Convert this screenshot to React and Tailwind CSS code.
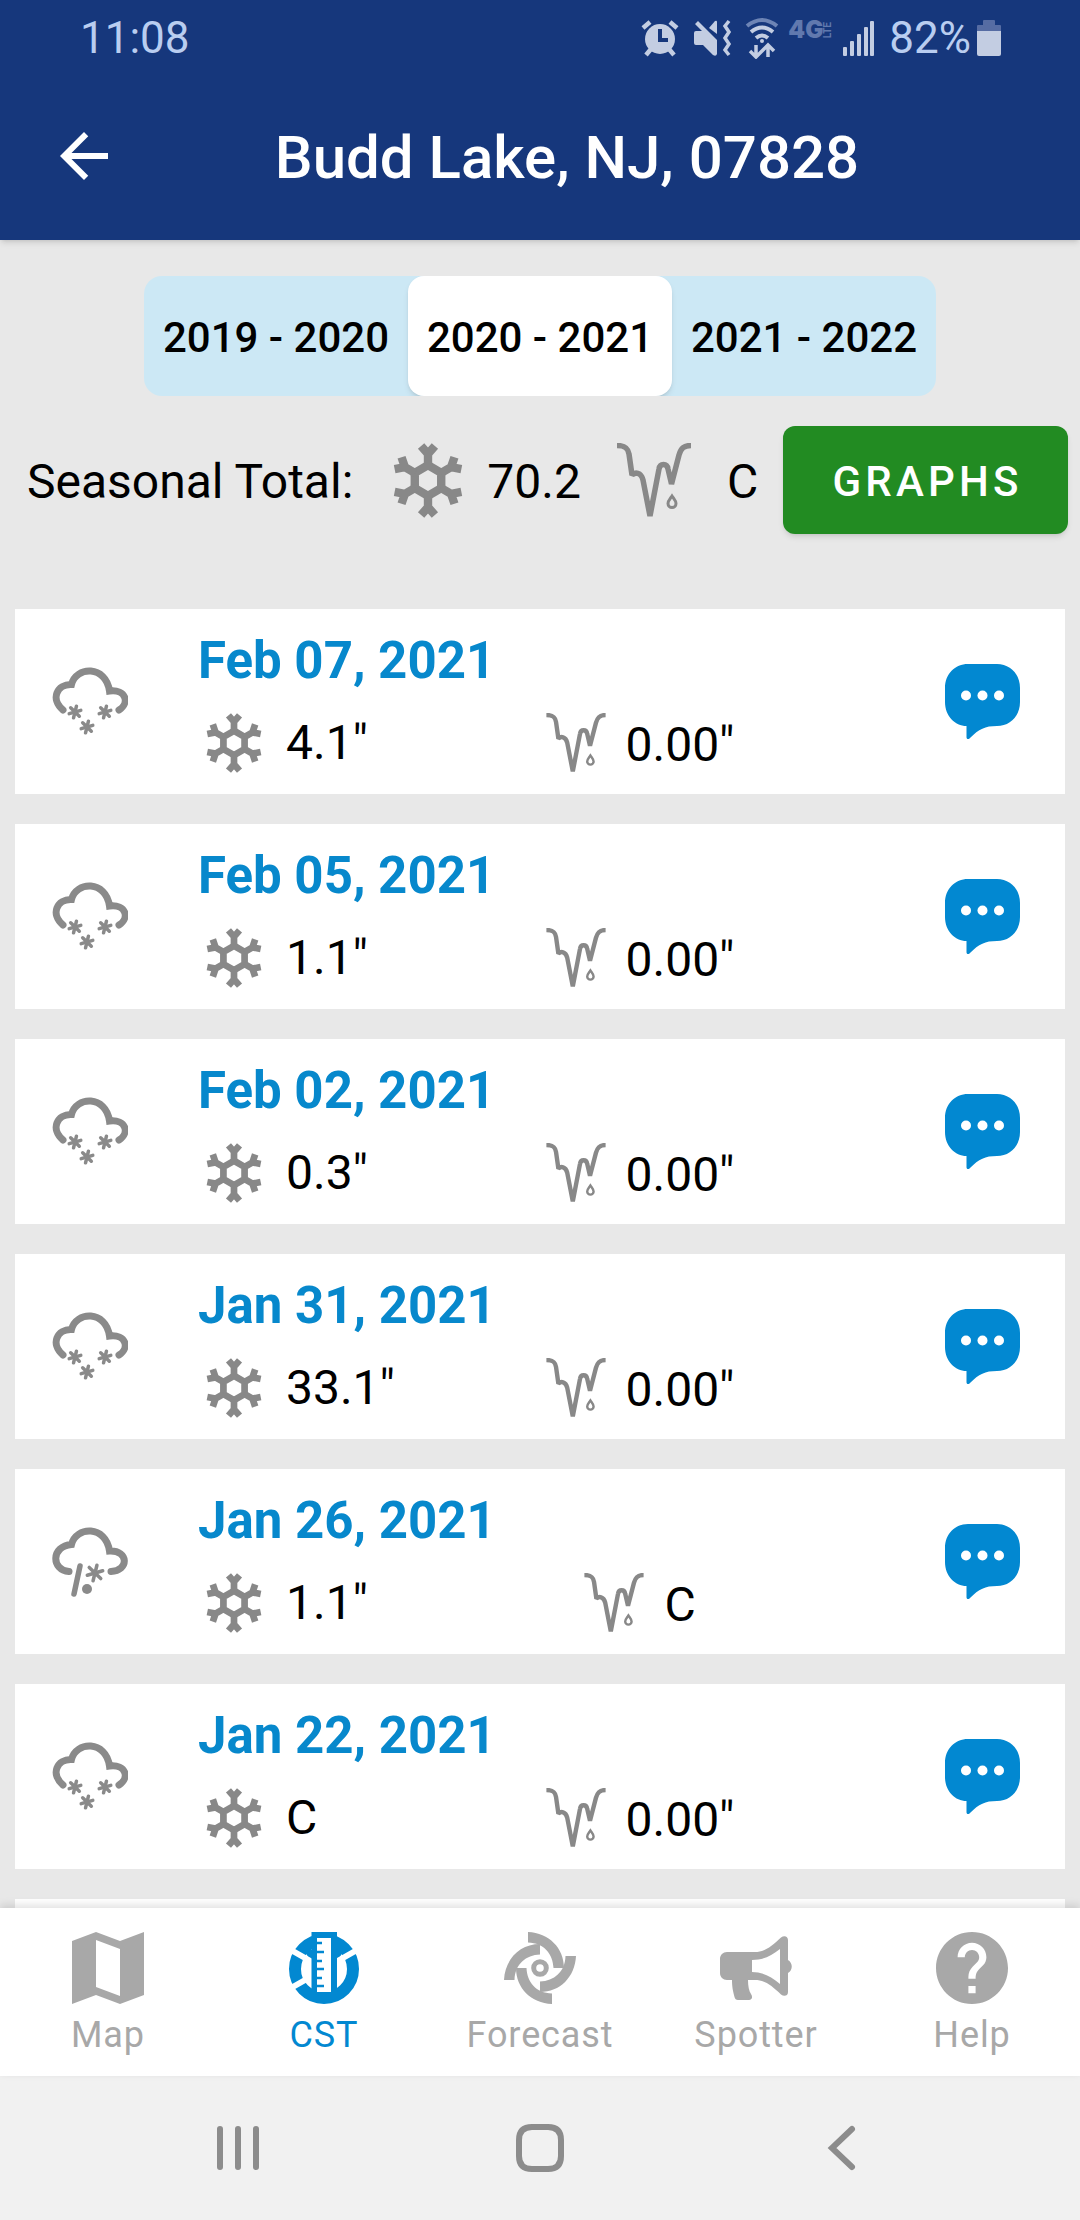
import React, { useState } from 'react';

const seasons = ['2019 - 2020', '2020 - 2021', '2021 - 2022'];

const reports = [
  { date: 'Feb 07, 2021', snow: '4.1"', melt: '0.00"', sky: 'snow' },
  { date: 'Feb 05, 2021', snow: '1.1"', melt: '0.00"', sky: 'snow' },
  { date: 'Feb 02, 2021', snow: '0.3"', melt: '0.00"', sky: 'snow' },
  { date: 'Jan 31, 2021', snow: '33.1"', melt: '0.00"', sky: 'snow' },
  { date: 'Jan 26, 2021', snow: '1.1"', melt: 'C', sky: 'mix' },
  { date: 'Jan 22, 2021', snow: 'C', melt: '0.00"', sky: 'snow' },
];

/* ---------- status bar icons ---------- */

const AlarmIcon = () => (
  <svg viewBox="0 0 40 40" className="h-10 w-10" stroke="#c3cde2" strokeWidth="4.5" fill="none">
    <circle cx="20" cy="21" r="15" fill="#c3cde2" stroke="none" />
    <path d="M3 10l7-6M30 4l7 6M6 37l5-6M34 37l-5-6" />
    <path d="M18 11h4v9h6v4H18z" fill="#16377c" stroke="none" />
  </svg>
);

const MuteIcon = () => (
  <svg viewBox="0 0 40 40" className="h-10 w-10" fill="#c3cde2">
    <path d="M3 6l3-3 19 19v14q-1 3-4 1l-10-10H4q-2 0-2-2V15q0-2 2-2h6z" />
    <path d="M25 4q0-2-2-1l-6 7 8 6z" />
    <path d="M37 3l-4 5 4 6-4 6 4 6-4 6 4 5" fill="none" stroke="#c3cde2" strokeWidth="3.5" />
  </svg>
);

const WifiIcon = () => (
  <svg viewBox="0 0 36 42" className="h-[42px] w-9" fill="none" stroke="#c3cde2" strokeWidth="4">
    <path d="M3 9q15-12 30 0" stroke="#6d84b5" />
    <path d="M7 15q11-9 22 0M12 21q6-5 12 0" />
    <circle cx="18" cy="24" r="2" fill="#c3cde2" stroke="none" />
    <path d="M12 28v12M6 34l6 6 6-6M24 40V29M18 34l6-6 6 6" strokeWidth="3.5" />
  </svg>
);

const SignalIcon = () => (
  <svg viewBox="0 0 32 36" className="h-9 w-8" fill="#c3cde2">
    <rect x="0" y="27" width="4" height="9" rx="1" />
    <rect x="7" y="21" width="4" height="15" rx="1" />
    <rect x="14" y="14" width="4" height="22" rx="1" />
    <rect x="21" y="7" width="4" height="29" rx="1" />
    <rect x="27" y="1" width="4" height="35" rx="1" />
  </svg>
);

const BatteryIcon = () => (
  <svg viewBox="0 0 24 36" className="h-9 w-6">
    <path d="M6 1q0-1 1-1h10q1 0 1 1v4h5q1 0 1 1v5H0V6q0-1 1-1h5z" fill="#566ca3" />
    <path d="M0 11h24v23q0 2-2 2H2q-2 0-2-2z" fill="#c3cde2" />
  </svg>
);

/* ---------- weather icons ---------- */

const SnowflakeIcon = ({ className }) => (
  <svg viewBox="0 0 70 76" className={className} fill="none" stroke="#888" strokeWidth="8.5">
    <path d="M35 22.5l13.4 7.8v15.4L35 53.5l-13.4-7.8V30.3z" />
    {[0, 60, 120, 180, 240, 300].map((angle) => (
      <path key={angle} d="M35 23V9M28 3l7 8 7-8" transform={`rotate(${angle} 35 38)`} />
    ))}
  </svg>
);

const IcicleIcon = ({ className }) => (
  <svg viewBox="0 0 74 75" className={className} fill="none" stroke="#888" strokeWidth="5.5">
    <path
      d="M0 2.5C8 2.5 11 5 12 11l3 21c3-3 9-3 11 5l7 36 9-47c1-6 8-6 9 0l3.5 15L62 12c2-7 5-9.5 12-9.5"
      strokeLinejoin="bevel"
    />
    <path d="M55 53c-2 3-4 5-4 7.500a4 4 0 0 0 8 0c0-2.500-2-4.500-4-7.500z" strokeWidth="3" />
  </svg>
);

const Flake = ({ x, y, r = 7 }) => (
  <g transform={`translate(${x} ${y}) rotate(14)`} strokeWidth="3.5">
    {[0, 60, 120].map((angle) => (
      <path key={angle} d={`M0 ${-r}V${r}`} transform={`rotate(${angle})`} />
    ))}
  </g>
);

const CloudIcon = ({ sky }) => (
  <svg
    viewBox="0 -3 76 76"
    className="h-[76px] w-[76px]"
    fill="none"
    stroke="#8a8a8a"
    strokeWidth="7"
    strokeLinecap="round"
  >
    {sky === 'mix' ? (
      <>
        <path d="M17 44.500C-1 43-1 19 19.500 17.500C24-1 54-2 57.500 24C77 23 77 44 59 44.500" />
        <path d="M28 39l-6 28" strokeWidth="5.500" />
        <circle cx="35" cy="62" r="5" fill="#8a8a8a" stroke="none" />
        <Flake x={43} y={46} r={8} />
      </>
    ) : (
      <>
        <path d="M11 43C-2 32 5 17 19.500 17.500C24-1 54-2 57.500 24C74 22 78 36 67 43" />
        <Flake x={23} y={45} r={6} />
        <Flake x={53} y={45} r={6} />
        <Flake x={35} y={60} r={6} />
      </>
    )}
  </svg>
);

const ChatIcon = () => (
  <svg viewBox="0 0 75 75" className="h-[75px] w-[75px]">
    <path
      d="M23 0h29c13 0 23 10 23 24v14c0 14-10 24-23 24-12 0-18 3-27 12-2 2-3.500 1-3.500-1V62C10 62 0 52 0 38V24C0 10 10 0 23 0z"
      fill="#0288d1"
    />
    <g fill="#fff">
      <circle cx="21" cy="31.500" r="5" />
      <circle cx="37.500" cy="31.500" r="5" />
      <circle cx="54" cy="31.500" r="5" />
    </g>
  </svg>
);

/* ---------- tab icons ---------- */

const MapIcon = () => (
  <path d="M0 9l24-9 24 9 24-9v63l-24 9-24-9-24 9zM24 8v47l24 9V17z" fillRule="evenodd" />
);

const CstIcon = () => (
  <>
    <circle cx="36" cy="37" r="29" fill="none" stroke="currentColor" strokeWidth="12" />
    <path d="M16 18h40L49 30H23z" />
    <path d="M3 18l22 12.500M69 18L47 30.500M3 56l22-12.500" stroke="#fff" strokeWidth="6" />
    <path d="M23.500 0H49v62H23.500z" />
    <path d="M29 6h14v54H29z" fill="#fff" />
    <path d="M28 11h6M28 20h8M28 29h6M28 37h8M28 46h6M28 54h8" stroke="currentColor" strokeWidth="2.500" />
  </>
);

const ForecastIcon = () => (
  <>
    <circle cx="36" cy="36" r="6.300" fill="none" stroke="currentColor" strokeWidth="5" />
    {[0, 90, 180, 270].map((angle) => (
      <path
        key={angle}
        d="M24 0c21 1 36 16 36 36H49.500C49 22 40 11 24 10.500z"
        transform={`rotate(${angle} 36 36)`}
      />
    ))}
  </>
);

const SpotterIcon = () => (
  <>
    <path d="M7 20h28c10 0 17-6 26-14.500C64 3 68 4 68 8v20c5 3 5 10 0 13v19c0 4-4 5-7 2.500C52 54 45 48 35 48h-7c0 6 1 11 3 14s1 6-2 6H18c-2 0-3-1-3.500-3-1.500-6-2.500-10-2.500-17H7c-4 0-7-3-7-7V27c0-4 3-7 7-7z" />
    <path d="M32 28c12 0 19-4 28-11v35c-9-8-18-12-28-12z" fill="#fff" />
  </>
);

const HelpIcon = () => (
  <path
    d="M12 2C6.48 2 2 6.48 2 12s4.48 10 10 10 10-4.48 10-10S17.52 2 12 2zm1 17h-2v-2h2v2zm2.07-7.75l-.9.92C13.45 12.9 13 13.5 13 15h-2v-.5c0-1.1.45-2.1 1.17-2.83l1.24-1.26c.37-.36.59-.86.59-1.41 0-1.1-.9-2-2-2s-2 .9-2 2H8c0-2.21 1.79-4 4-4s4 1.79 4 4c0 .88-.36 1.68-.93 2.25z"
    transform="scale(3.6) translate(-2 -2)"
  />
);

const tabs = [
  { label: 'Map', icon: MapIcon },
  { label: 'CST', icon: CstIcon },
  { label: 'Forecast', icon: ForecastIcon },
  { label: 'Spotter', icon: SpotterIcon },
  { label: 'Help', icon: HelpIcon },
];

/* ---------- sections ---------- */

const StatusBar = () => (
  <div className="flex h-[72px] items-center justify-between pt-1 pr-[79px] pl-20 text-[44px] text-[#b9cdf0]">
    <span>11:08</span>
    <div className="flex items-center">
      <AlarmIcon />
      <div className="ml-3">
        <MuteIcon />
      </div>
      <div className="ml-3">
        <WifiIcon />
      </div>
      <div className="mb-4 ml-2 flex items-center text-[#6179ae]">
        <span className="font-[Inter,sans-serif] text-2xl leading-5 font-black">4G</span>
        <span className="rotate-180 text-[10px] leading-[10px] font-bold [writing-mode:vertical-rl]">LTE</span>
      </div>
      <div className="ml-2.5">
        <SignalIcon />
      </div>
      <span className="ml-3.5">82%</span>
      <div className="ml-1.5">
        <BatteryIcon />
      </div>
    </div>
  </div>
);

const Header = () => (
  <header className="z-10 shrink-0 bg-[#16377c] shadow-md">
    <StatusBar />
    <div className="flex h-[168px] items-center pr-[66px] pl-12">
      <button type="button" aria-label="Back" className="shrink-0 text-white">
        <svg viewBox="0 0 24 24" className="h-[72px] w-[72px]" fill="currentColor">
          <path d="M20 11H7.83l5.59-5.59L12 4l-8 8 8 8 1.41-1.41L7.83 13H20v-2z" />
        </svg>
      </button>
      <h1 className="flex-1 pt-1 text-center text-[60px] leading-none font-medium text-white">
        Budd Lake, NJ, 07828
      </h1>
    </div>
  </header>
);

const SeasonPicker = ({ value, onChange }) => (
  <div className="mx-36 mt-9 flex h-[120px] overflow-hidden rounded-[18px] bg-[#cce8f5]">
    {seasons.map((season) => (
      <button
        key={season}
        type="button"
        aria-pressed={season === value}
        onClick={() => onChange(season)}
        className={`flex-1 rounded-2xl pt-0.5 text-[42px] font-medium whitespace-nowrap ${
          season === value ? 'bg-white shadow-md' : ''
        }`}
      >
        {season}
      </button>
    ))}
  </div>
);

const SeasonTotal = () => (
  <div className="mt-[30px] flex h-[108px] items-center pr-3 pl-[27px] text-[48px]">
    <span className="pt-1">Seasonal Total:</span>
    <SnowflakeIcon className="ml-10 h-[75px] w-[70px]" />
    <span className="pt-1 pl-6">70.2</span>
    <IcicleIcon className="ml-9 h-[75px] w-[74px]" />
    <span className="pt-1 pl-9">C</span>
    <button
      type="button"
      className="ml-auto h-full w-[285px] rounded-xl bg-[#228b22] pt-0.5 pl-1 text-[42px] font-medium tracking-widest text-white shadow-md"
    >
      GRAPHS
    </button>
  </div>
);

const ReportCard = ({ date, snow, melt, sky }) => (
  <li className="flex h-[185px] shrink-0 items-center bg-white">
    <div className="flex w-[150px] shrink-0 justify-center">
      <CloudIcon sky={sky} />
    </div>
    <div className="flex-1 pt-[3px] pl-[33px]">
      <h2 className="text-[51px] leading-[60px] font-bold text-[#0788cc]">{date}</h2>
      <div className="mt-[19px] flex h-[66px] items-center text-[48px] leading-[60px]">
        <div className="flex w-[242px] items-center pl-2">
          <SnowflakeIcon className="h-[60px] w-14" />
          <span className="ml-6">{snow}</span>
        </div>
        <div className="flex flex-1 items-center justify-center pr-[60px]">
          <IcicleIcon className="h-[60px] w-[60px]" />
          <span className="mt-1 ml-5">{melt}</span>
        </div>
      </div>
    </div>
    <div className="flex w-[165px] shrink-0 justify-center">
      <button type="button" aria-label={`Comments for ${date}`}>
        <ChatIcon />
      </button>
    </div>
  </li>
);

const TabBar = ({ active }) => (
  <nav className="z-10 flex h-[168px] shrink-0 bg-white shadow-[0_-3px_8px_rgba(0,0,0,0.12)]">
    {tabs.map(({ label, icon: Icon }) => (
      <a
        key={label}
        href={`#${label.toLowerCase()}`}
        className={`flex flex-1 flex-col items-center pt-6 text-4xl tracking-wide ${
          label === active ? 'text-[#0288d1]' : 'text-[#a8a8a8]'
        }`}
      >
        <svg viewBox="0 0 72 72" className="h-[72px] w-[72px]" fill="currentColor">
          <Icon />
        </svg>
        <span className="mt-2.5 leading-[42px]">{label}</span>
      </a>
    ))}
  </nav>
);

const SystemNav = () => (
  <div className="flex h-36 shrink-0 items-center bg-[#f1f1f1] px-[87px]">
    {[
      ['Recent apps', 'M6 5v38M24 5v38M42 5v38'],
      ['Home', 'M16 3h16q13 0 13 13v16q0 13-13 13H16Q3 45 3 32V16Q3 3 16 3z'],
      ['System back', 'M34 5L14 24l20 19'],
    ].map(([label, d]) => (
      <button key={label} type="button" aria-label={label} className="flex flex-1 justify-center">
        <svg viewBox="0 0 48 48" className="h-12 w-12" fill="none" stroke="#8c8c8c" strokeWidth="6" strokeLinecap="round">
          <path d={d} />
        </svg>
      </button>
    ))}
  </div>
);

export default function App() {
  const [season, setSeason] = useState('2020 - 2021');

  return (
    <div className="flex h-screen flex-col bg-[#e8e8e8] font-[Roboto,sans-serif] text-black">
      <Header />
      <main className="flex min-h-0 flex-1 flex-col">
        <SeasonPicker value={season} onChange={setSeason} />
        <SeasonTotal />
        <ul className="mx-[15px] mt-[75px] flex min-h-0 flex-1 flex-col gap-[30px] overflow-hidden">
          {reports.map((report) => (
            <ReportCard key={report.date} {...report} />
          ))}
          <li className="h-[185px] shrink-0 bg-white" />
        </ul>
      </main>
      <TabBar active="CST" />
      <SystemNav />
    </div>
  );
}
